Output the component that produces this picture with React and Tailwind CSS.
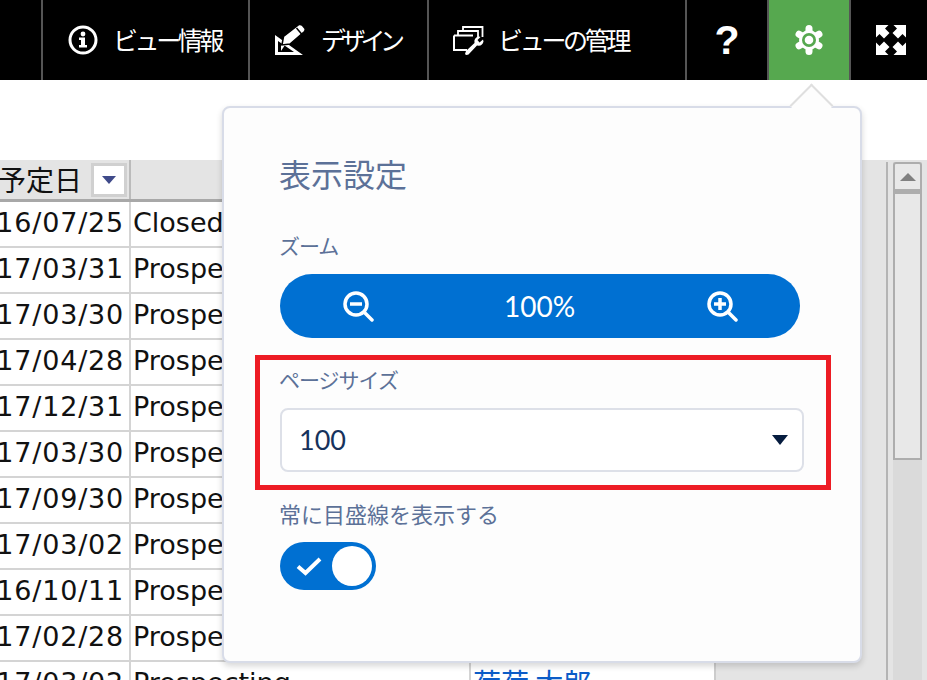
const jp = "font-['Noto_Sans_CJK_JP',sans-serif]";

const rows = [
  ["16/07/25", "Closed Won"],
  ["17/03/31", "Prospecting"],
  ["17/03/30", "Prospecting"],
  ["17/04/28", "Prospecting"],
  ["17/12/31", "Prospecting"],
  ["17/03/30", "Prospecting"],
  ["17/09/30", "Prospecting"],
  ["17/03/02", "Prospecting"],
  ["16/10/11", "Prospecting"],
  ["17/02/28", "Prospecting"],
  ["17/03/02", "Prospecting"],
];

function InfoIcon() {
  return (
    <svg width="30" height="30" viewBox="0 0 30 30" fill="none">
      <circle cx="15" cy="15" r="13" stroke="white" strokeWidth="3" />
      <circle cx="15" cy="9" r="2.4" fill="white" />
      <path d="M11 12.500h6v7.500h2v2.500h-8V20h2v-5h-2z" fill="white" />
    </svg>
  );
}

function DesignIcon() {
  return (
    <svg width="30" height="30" viewBox="0 0 30 30" fill="none">
      <path fillRule="evenodd" d="M0 10 L28 30 H0 Z M3 16 V27 H19 Z" fill="white" />
      <path d="M6 20 L10 20 L6 26 Z" fill="white" />
      <path d="M7 20 L8.500 11.500 L24 -.5 Q26 -1 27.500 .5 L30 3.500 Q30.500 5 29.500 6.500 L15 19 Z" fill="white" stroke="black" strokeWidth="1.500" />
      <path d="M21.500 3 L27 9.500" stroke="black" strokeWidth="1.500" />
    </svg>
  );
}

function ManageIcon() {
  return (
    <svg width="32" height="32" viewBox="0 0 32 32" fill="none">
      <path d="M1 11.500 H20 M1 11.500 V26 H14" stroke="white" strokeWidth="2" />
      <path d="M5 11 V7 H25 V14 M10 7 V3 H29.500 V13" stroke="white" strokeWidth="1.800" />
      <path d="M12 30 L13 27 L21.500 19 Q20.500 13.500 26 12.500 L27.500 13 L24.500 16 L26.500 18.500 L30 15.500 L30.500 17.500 Q29.500 22.500 24 21.500 L15.500 30.500 Q13 31.500 12 30 Z" fill="white" />
    </svg>
  );
}

function GearIcon() {
  return (
    <svg width="30" height="30" viewBox="0 0 30 30" fill="none">
      {[0, 60, 120].map((a) => (
        <path key={a} d="M15 3.500 V26.500" stroke="white" strokeWidth="7" strokeLinecap="round" transform={`rotate(${a} 15 15)`} />
      ))}
      <circle cx="15" cy="15" r="10" fill="white" />
      <circle cx="15" cy="15" r="7" fill="#56a84f" />
      <circle cx="15" cy="15" r="4.300" fill="white" />
    </svg>
  );
}

function ExpandIcon() {
  const arrow = "M0 0 H12.500 L9 3.500 L13.500 8 L8 13.500 L3.500 9 L0 12.500 Z";
  return (
    <svg width="30" height="30" viewBox="0 0 30 30" fill="white">
      <path d={arrow} />
      <path d={arrow} transform="translate(30 0) scale(-1 1)" />
      <path d={arrow} transform="translate(0 30) scale(1 -1)" />
      <path d={arrow} transform="translate(30 30) scale(-1 -1)" />
    </svg>
  );
}

function ZoomIcon({ plus }) {
  return (
    <svg width="32" height="32" viewBox="0 0 32 32" fill="none" stroke="white">
      <circle cx="14" cy="14" r="11" strokeWidth="3.500" />
      <path d="M22.500 22.500 L30 30" strokeWidth="3.500" strokeLinecap="round" />
      <path d="M8 14 H20" strokeWidth="3.500" />
      {plus && <path d="M14 8 V20" strokeWidth="3.500" />}
    </svg>
  );
}

function NavItem({ children, className = "" }) {
  return (
    <div className={`h-full shrink-0 flex items-center border-l-2 border-[#555] ${className}`}>
      {children}
    </div>
  );
}

function Header() {
  return (
    <header className={`h-20 bg-black flex text-white ${jp}`}>
      <div className="w-[41px] shrink-0" />
      <NavItem className="w-[207px] pl-[25px] gap-[15px]">
        <InfoIcon />
        <span className="text-[25px] tracking-[-3.400px]">ビュー情報</span>
      </NavItem>
      <NavItem className="w-[179px] pl-[25px] gap-[16px]">
        <DesignIcon />
        <span className="text-[25px] tracking-[-5.300px]">デザイン</span>
      </NavItem>
      <NavItem className="w-[258px] pl-[24px] gap-[13px]">
        <ManageIcon />
        <span className="text-[25px] tracking-[-3.300px]">ビューの管理</span>
      </NavItem>
      <NavItem className="w-[82px] justify-center">
        <span className="font-['Liberation_Sans',sans-serif] font-bold text-[41px] leading-none">?</span>
      </NavItem>
      <NavItem className="w-[82px] justify-center bg-[#56a84f]">
        <GearIcon />
      </NavItem>
      <NavItem className="flex-1 pl-[25px]">
        <ExpandIcon />
      </NavItem>
    </header>
  );
}

function Grid() {
  return (
    <div className="mt-20 h-[520px] flex overflow-hidden bg-[#e4e4e4]">
      <div className="w-[716px] shrink-0 border-r-2 border-[#ccc] bg-white font-['DejaVu_Sans',sans-serif] text-[27px] text-[#111]">
        <div className="h-[42px] flex bg-[#e4e4e4] border-b-[3px] border-[#a8a8a8]">
          <div className="w-[131px] shrink-0 flex justify-end items-center pr-[2px] border-r-2 border-[#bbb] overflow-hidden">
            <span className={`${jp} text-[28px] whitespace-nowrap mr-[9px] mb-[2px]`}>予定日</span>
            <div className="w-[36px] h-[34px] shrink-0 border-[3px] border-[#d0d0d0] bg-white flex items-center justify-center">
              <div className="border-x-[7px] border-t-[8px] border-x-transparent border-t-[#3f4a8a]" />
            </div>
          </div>
        </div>
        {rows.map(([date, stage], i) => (
          <div key={i} className="h-[46px] flex border-b-2 border-[#d4d4d4]">
            <div className="w-[131px] shrink-0 flex justify-end items-center pr-[5px] pb-[2px] border-r-2 border-[#d4d4d4] overflow-hidden whitespace-nowrap tracking-[0.8px]">
              {date}
            </div>
            <div className="w-[340px] shrink-0 flex items-center justify-between pl-[2px] pr-[15px] pb-[2px] border-r-2 border-[#d4d4d4]">
              <span>{stage}</span>
              <div className="border-x-[6px] border-t-[7px] border-x-transparent border-t-black" />
            </div>
            {i === 10 && <div className={`${jp} pl-[2px] text-[#0b5cc7] text-[28px] leading-[40px] whitespace-nowrap`}>荷荷 太郎</div>}
          </div>
        ))}
      </div>
      <div className="flex-1 flex justify-end pt-[2px] pr-[5px]">
        <div className="w-[2px] bg-[#b4b4b4]" />
        <div className="w-[29px] ml-[5px] bg-[#dadada] flex flex-col">
          <div className="h-[30px] flex items-center justify-center bg-[#e8e8e8] border-2 border-b-[3px] border-[#adadad] rounded-t-[3px]">
            <div className="border-x-[8px] border-b-[8px] border-x-transparent border-b-[#808080]" />
          </div>
          <div className="h-[268px] bg-[#e8e8e8] border-2 border-[#adadad]" />
        </div>
      </div>
    </div>
  );
}

function SettingsPopover() {
  return (
    <div className={`absolute left-[222px] top-[106px] w-[640px] h-[557px] bg-[#fdfdfd] border-2 border-[#d8dce8] rounded-lg shadow-[0_3px_6px_rgba(0,0,0,0.16)] pl-[56px] pt-[45px] text-[#5c7198] ${jp}`}>
      <div className="absolute right-[33px] top-[-18px] w-[31px] h-[31px] rotate-45 bg-[#fdfdfd] border-l-2 border-t-2 border-[#dfdfdf]" />
      <h2 className="text-[32px] leading-10 -ml-[1px]">表示設定</h2>
      <div className="mt-[38px] text-[21px] leading-7 tracking-[-1px] -ml-[1px]">ズーム</div>
      <div className="mt-[15px] w-[520px] h-16 rounded-full bg-[#0070d2] flex items-center justify-between px-[62px] text-white">
        <ZoomIcon />
        <span className="font-['Lato',sans-serif] text-[28px] -ml-[1px]">100%</span>
        <ZoomIcon plus />
      </div>
      <div className="mt-[17px] -ml-[25px] w-[576px] border-[5px] border-[#ed1c24] pl-[20px] pt-[5px] pb-[13px]">
        <div className="text-[21px] leading-7 tracking-[-1px] -ml-[1px]">ページサイズ</div>
        <div className="mt-[15px] w-[524px] h-16 bg-white border-2 border-[#dde0e8] rounded-lg flex items-center justify-between pl-[17px] pr-[14px]">
          <span className="font-['Lato',sans-serif] text-[27px] text-[#16325c]">100</span>
          <div className="border-x-[8px] border-t-[10px] border-x-transparent border-t-[#061c3f]" />
        </div>
      </div>
      <div className="mt-[9px] text-[22px] leading-7 -ml-[1px]">常に目盛線を表示する</div>
      <div className="mt-[15px] w-[96px] h-12 rounded-full bg-[#0070d2] flex items-center justify-between pl-[16px] pr-[4px]">
        <svg width="26" height="20" viewBox="0 0 26 20" fill="none">
          <path d="M2 10.500 L9.500 17 L24 3" stroke="white" strokeWidth="4" />
        </svg>
        <div className="w-10 h-10 rounded-full bg-white" />
      </div>
    </div>
  );
}

export default function App() {
  return (
    <div className="relative w-[927px] h-[680px] overflow-hidden bg-white">
      <Header />
      <Grid />
      <SettingsPopover />
    </div>
  );
}
